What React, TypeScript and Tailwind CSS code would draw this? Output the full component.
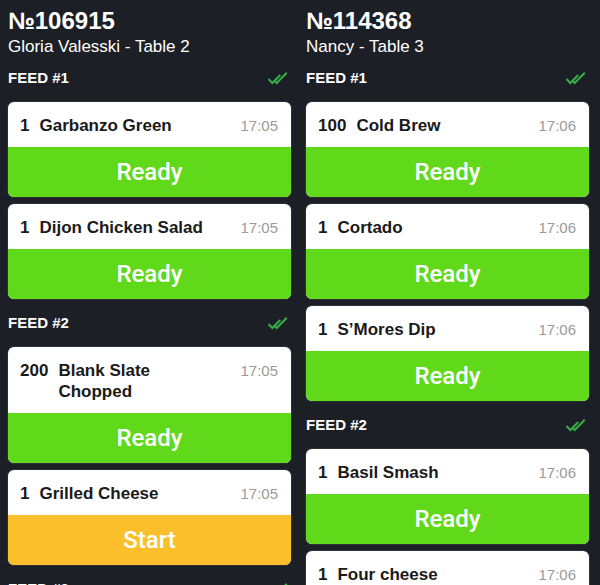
import React from "react";

type Item = { qty: string; name: string[]; time: string; action: "Ready" | "Start" };
type Section = { title: string; items: Item[] };
type Order = { no: string; who: string; sections: Section[] };

const orders: Order[] = [
  {
    no: "№106915",
    who: "Gloria Valesski - Table 2",
    sections: [
      {
        title: "FEED #1",
        items: [
          { qty: "1", name: ["Garbanzo Green"], time: "17:05", action: "Ready" },
          { qty: "1", name: ["Dijon Chicken Salad"], time: "17:05", action: "Ready" },
        ],
      },
      {
        title: "FEED #2",
        items: [
          { qty: "200", name: ["Blank Slate", "Chopped"], time: "17:05", action: "Ready" },
          { qty: "1", name: ["Grilled Cheese"], time: "17:05", action: "Start" },
        ],
      },
      {
        title: "FEED #3",
        items: [{ qty: "1", name: ["Tomato Soup"], time: "17:05", action: "Start" }],
      },
    ],
  },
  {
    no: "№114368",
    who: "Nancy - Table 3",
    sections: [
      {
        title: "FEED #1",
        items: [
          { qty: "100", name: ["Cold Brew"], time: "17:06", action: "Ready" },
          { qty: "1", name: ["Cortado"], time: "17:06", action: "Ready" },
          { qty: "1", name: ["S’Mores Dip"], time: "17:06", action: "Ready" },
        ],
      },
      {
        title: "FEED #2",
        items: [
          { qty: "1", name: ["Basil Smash"], time: "17:06", action: "Ready" },
          { qty: "1", name: ["Four cheese"], time: "17:06", action: "Ready" },
        ],
      },
    ],
  },
];

function DoubleCheck() {
  return (
    <svg width="20" height="13" viewBox="0 0 20 13" fill="none" className="mr-[3px]">
      <path d="M1.2 7.8 L4.3 10.9 L11.5 3.7" stroke="#37ad46" strokeWidth="2.1" strokeLinecap="square" />
      <path d="M7 9.2 L8.7 10.9 L18 1.6" stroke="#37ad46" strokeWidth="2.1" strokeLinecap="square" />
    </svg>
  );
}

function Card({ item }: { item: Item }) {
  const ready = item.action === "Ready";
  return (
    <div className="rounded-[6px] overflow-hidden bg-white shadow-[0_0_0_1px_rgba(255,255,255,0.08)]">
      <div className="flex items-start pl-3 pr-[13px] pt-[13px] pb-[11px]">
        <span className="text-[17px] leading-[21px] font-bold text-[#1a1a1a] mr-[10px]">{item.qty}</span>
        <div className="flex-1 text-[17px] leading-[21px] font-bold text-[#1a1a1a]">
          {item.name.map((n, i) => (
            <div key={i}>{n}</div>
          ))}
        </div>
        <span className="text-[15px] leading-[21px] text-[#9a9a9a]">{item.time}</span>
      </div>
      <div
        className={
          "h-[50px] flex items-center justify-center text-white text-[24px] font-medium " +
          (ready ? "bg-[#61d91b]" : "bg-[#fbbf2c]")
        }
        style={{ fontFamily: "Roboto, sans-serif" }}
      >
        {item.action}
      </div>
    </div>
  );
}

function Column({ order }: { order: Order }) {
  return (
    <div className="w-[283px] flex flex-col pt-[7px]">
      <div className="text-[24px] leading-[28px] font-bold text-white">{order.no}</div>
      <div className="text-[17px] leading-[24px] text-white">{order.who}</div>
      {order.sections.map((s, si) => (
        <div key={si} className={si === 0 ? "mt-[2px]" : "mt-[7px]"}>
          <div className="h-[34px] flex items-center justify-between">
            <span className="text-[15px] font-bold text-white">{s.title}</span>
            <DoubleCheck />
          </div>
          <div className="flex flex-col gap-[7px] mt-[7px]">
            {s.items.map((it, i) => (
              <Card key={i} item={it} />
            ))}
          </div>
        </div>
      ))}
    </div>
  );
}

export default function App() {
  return (
    <div
      className="w-[600px] h-[585px] overflow-hidden bg-[#1c1f26] flex gap-[15px] pl-2"
      style={{ fontFamily: "'Liberation Sans', Arial, sans-serif" }}
    >
      {orders.map((o, i) => (
        <Column key={i} order={o} />
      ))}
    </div>
  );
}
